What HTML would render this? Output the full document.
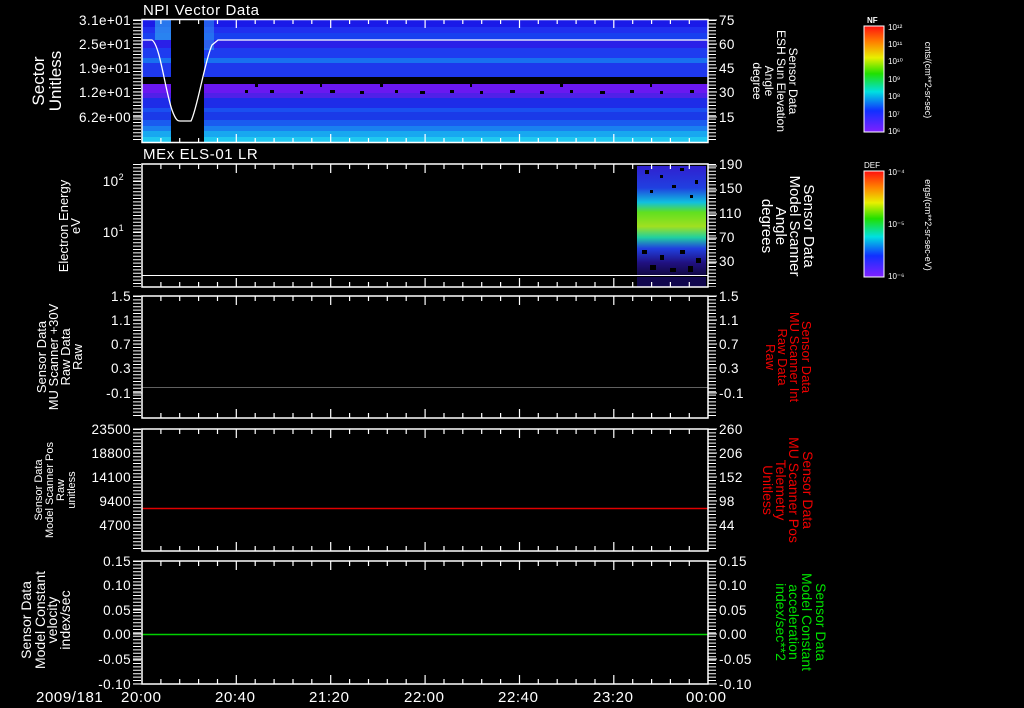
<!DOCTYPE html>
<html><head><meta charset="utf-8"><style>
html,body{margin:0;padding:0;background:#000;}
svg{display:block;font-family:"Liberation Sans",sans-serif;}
</style></head><body>
<svg width="1024" height="708" viewBox="0 0 1024 708" xmlns="http://www.w3.org/2000/svg">
<defs>
<linearGradient id="cb" x1="0" y1="0" x2="0" y2="1">
<stop offset="0" stop-color="#ff1010"/><stop offset="0.15" stop-color="#ff8000"/><stop offset="0.3" stop-color="#e8f000"/><stop offset="0.45" stop-color="#20e000"/><stop offset="0.62" stop-color="#00e0e0"/><stop offset="0.8" stop-color="#1030ff"/><stop offset="1" stop-color="#8020ff"/>
</linearGradient>
<linearGradient id="sp2" x1="0" y1="0" x2="0" y2="1">
<stop offset="0" stop-color="#3020d0"/><stop offset="0.2" stop-color="#2040e0"/><stop offset="0.33" stop-color="#10c0e0"/><stop offset="0.42" stop-color="#60e020"/><stop offset="0.55" stop-color="#a0e020"/><stop offset="0.65" stop-color="#20d0a0"/><stop offset="0.75" stop-color="#2040e0"/><stop offset="0.88" stop-color="#201080"/><stop offset="1" stop-color="#100840"/>
</linearGradient>
<path id="mt" d="M160.9,0v5M179.7,0v5M198.6,0v5M217.5,0v5M236.3,0v9M255.2,0v5M274.1,0v5M293,0v5M311.8,0v5M330.7,0v9M349.6,0v5M368.5,0v5M387.3,0v5M406.2,0v5M425.1,0v9M444,0v5M462.8,0v5M481.7,0v5M500.6,0v5M519.5,0v9M538.3,0v5M557.2,0v5M576.1,0v5M595,0v5M613.8,0v9M632.7,0v5M651.6,0v5M670.4,0v5M689.3,0v5" stroke="#fff" stroke-width="1.2" fill="none"/>
<path id="mb" d="M160.9,0v-5M179.7,0v-5M198.6,0v-5M217.5,0v-5M236.3,0v-9M255.2,0v-5M274.1,0v-5M293,0v-5M311.8,0v-5M330.7,0v-9M349.6,0v-5M368.5,0v-5M387.3,0v-5M406.2,0v-5M425.1,0v-9M444,0v-5M462.8,0v-5M481.7,0v-5M500.6,0v-5M519.5,0v-9M538.3,0v-5M557.2,0v-5M576.1,0v-5M595,0v-5M613.8,0v-9M632.7,0v-5M651.6,0v-5M670.4,0v-5M689.3,0v-5" stroke="#fff" stroke-width="1.2" fill="none"/>
</defs>

<!-- Panel 1 spectrogram -->
<g>
<rect x="142" y="20" width="566" height="7" fill="#1a1ae8"/>
<rect x="142" y="27" width="566" height="6" fill="#2030f0"/>
<rect x="142" y="33" width="566" height="7" fill="#1840f0"/>
<rect x="142" y="40" width="566" height="8" fill="#2a20e8"/>
<rect x="142" y="48" width="566" height="10" fill="#1e3cf0"/>
<rect x="142" y="58" width="566" height="5" fill="#1870f0"/>
<rect x="142" y="63" width="566" height="14" fill="#1e38ec"/>
<rect x="142" y="77" width="566" height="7" fill="#000"/>
<rect x="142" y="84" width="566" height="9" fill="#6a18f0"/>
<rect x="142" y="93" width="566" height="5" fill="#5020e8"/>
<rect x="142" y="98" width="566" height="10" fill="#1e2ce8"/>
<rect x="142" y="108" width="566" height="4" fill="#1a50f0"/>
<rect x="142" y="112" width="566" height="8" fill="#1a3ae8"/>
<rect x="142" y="120" width="566" height="6" fill="#1a5cf0"/>
<rect x="142" y="126" width="566" height="5" fill="#1a80f0"/>
<rect x="142" y="131" width="566" height="6" fill="#18a8f0"/>
<rect x="142" y="137" width="566" height="5" fill="#20c8f0"/>
<rect x="155" y="20" width="16" height="20" fill="#30a0f0" opacity="0.7"/>
<rect x="204" y="20" width="10" height="30" fill="#30a0f0" opacity="0.5"/>
<rect x="171" y="20" width="33" height="122" fill="#000"/>
<g fill="#000">
<rect x="245" y="90" width="3" height="3"/><rect x="270" y="90" width="4" height="3"/><rect x="300" y="91" width="3" height="3"/><rect x="330" y="90" width="5" height="3"/><rect x="360" y="91" width="4" height="3"/><rect x="395" y="90" width="3" height="3"/><rect x="420" y="91" width="5" height="3"/><rect x="450" y="90" width="4" height="3"/><rect x="480" y="91" width="3" height="3"/><rect x="510" y="90" width="5" height="3"/><rect x="540" y="91" width="4" height="3"/><rect x="570" y="90" width="3" height="3"/><rect x="600" y="91" width="5" height="3"/><rect x="630" y="90" width="4" height="3"/><rect x="660" y="91" width="3" height="3"/><rect x="690" y="90" width="4" height="3"/>
<rect x="255" y="84" width="3" height="3"/><rect x="320" y="84" width="2" height="3"/><rect x="380" y="84" width="3" height="3"/><rect x="470" y="84" width="2" height="3"/><rect x="560" y="84" width="3" height="3"/><rect x="650" y="84" width="2" height="3"/>
</g>
<path d="M142,40 L152,40 C160,45 165,90 172,110 C176,121 178,121 180,121 L191,121 C197,110 205,60 212,45 L218,40 L708,40" fill="none" stroke="#fff" stroke-width="1.3"/>
</g>

<!-- Panel 2 spectrogram -->
<rect x="637" y="166" width="69" height="110" fill="url(#sp2)"/>
<g fill="#000">
<rect x="645" y="170" width="4" height="4"/><rect x="660" y="175" width="3" height="3"/><rect x="680" y="168" width="4" height="3"/><rect x="695" y="180" width="3" height="4"/><rect x="650" y="190" width="3" height="3"/><rect x="672" y="185" width="4" height="3"/><rect x="690" y="195" width="3" height="3"/>
<rect x="642" y="250" width="5" height="4"/><rect x="660" y="255" width="4" height="5"/><rect x="680" y="250" width="5" height="4"/><rect x="696" y="258" width="5" height="5"/><rect x="650" y="265" width="6" height="5"/><rect x="670" y="268" width="6" height="4"/><rect x="688" y="266" width="5" height="6"/>
</g>
<rect x="637" y="277" width="69" height="10" fill="#1a0a80" opacity="0.6"/>
<line x1="142" y1="275.5" x2="708" y2="275.5" stroke="#fff" stroke-width="1"/>

<!-- data lines -->
<line x1="142" y1="387.5" x2="708" y2="387.5" stroke="#606060" stroke-width="1"/>
<line x1="142" y1="508.5" x2="708" y2="508.5" stroke="#e00000" stroke-width="1.5"/>
<line x1="142" y1="634.5" x2="708" y2="634.5" stroke="#00d000" stroke-width="1.5"/>

<!-- frames -->
<g fill="none" stroke="#fff" stroke-width="1.5">
<rect x="142" y="19.5" width="566" height="123"/>
<rect x="142" y="164" width="566" height="123"/>
<rect x="142" y="296" width="566" height="122"/>
<rect x="142" y="429" width="566" height="122"/>
<rect x="142" y="561" width="566" height="123"/>
</g>
<!-- time ticks -->
<use href="#mt" y="19"/><use href="#mb" y="143"/>
<use href="#mt" y="164"/><use href="#mb" y="287"/>
<use href="#mt" y="296"/><use href="#mb" y="418"/>
<use href="#mt" y="429"/><use href="#mb" y="551"/>
<use href="#mt" y="561"/><use href="#mb" y="684"/>

<!-- y minor ticks (dense) -->
<g stroke="#fff" fill="none">
<path d="M137,20v122M712,20v122M137,164v123M712,164v123M137,296v122M712,296v122M137,429v122M712,429v122M137,561v123M712,561v123" stroke-width="8" stroke-dasharray="1 2.4"/>
</g>
<g stroke="#fff" stroke-width="1">
<path d="M133,20h9M133,44h9M133,68h9M133,92h9M133,117h9M708,20h9M708,44h9M708,68h9M708,92h9M708,117h9"/>
<path d="M133,181h9M133,232h9M708,166h9M708,190h9M708,214h9M708,238h9M708,262h9"/>
<path d="M133,296h9M133,320h9M133,344h9M133,368h9M133,393h9M708,296h9M708,320h9M708,344h9M708,368h9M708,393h9"/>
<path d="M133,429h9M133,453h9M133,477h9M133,501h9M133,525h9M708,429h9M708,453h9M708,477h9M708,501h9M708,525h9"/>
<path d="M133,561h9M133,585h9M133,610h9M133,634h9M133,659h9M133,684h9M708,561h9M708,585h9M708,610h9M708,634h9M708,659h9M708,684h9"/>
</g>

<!-- tick labels -->
<g fill="#fff" font-size="13.5" letter-spacing="0.4">
<g text-anchor="end">
<text x="131" y="25">3.1e+01</text><text x="131" y="49">2.5e+01</text><text x="131" y="73">1.9e+01</text><text x="131" y="97">1.2e+01</text><text x="131" y="122">6.2e+00</text>
<text x="124" y="186">10<tspan font-size="9" dy="-6">2</tspan></text><text x="124" y="237">10<tspan font-size="9" dy="-6">1</tspan></text>
<text x="131" y="301">1.5</text><text x="131" y="325">1.1</text><text x="131" y="349">0.7</text><text x="131" y="373">0.3</text><text x="131" y="398">-0.1</text>
<text x="131" y="434">23500</text><text x="131" y="458">18800</text><text x="131" y="482">14100</text><text x="131" y="506">9400</text><text x="131" y="530">4700</text>
<text x="131" y="566">0.15</text><text x="131" y="590">0.10</text><text x="131" y="615">0.05</text><text x="131" y="639">0.00</text><text x="131" y="664">-0.05</text><text x="131" y="689">-0.10</text>
</g>
<text x="719" y="25">75</text><text x="719" y="49">60</text><text x="719" y="73">45</text><text x="719" y="97">30</text><text x="719" y="122">15</text>
<text x="719" y="169">190</text><text x="719" y="193">150</text><text x="719" y="218">110</text><text x="719" y="242">70</text><text x="719" y="266">30</text>
<text x="719" y="301">1.5</text><text x="719" y="325">1.1</text><text x="719" y="349">0.7</text><text x="719" y="373">0.3</text><text x="719" y="398">-0.1</text>
<text x="719" y="434">260</text><text x="719" y="458">206</text><text x="719" y="482">152</text><text x="719" y="506">98</text><text x="719" y="530">44</text>
<text x="719" y="566">0.15</text><text x="719" y="590">0.10</text><text x="719" y="615">0.05</text><text x="719" y="639">0.00</text><text x="719" y="664">-0.05</text><text x="719" y="689">-0.10</text>
<g font-size="15" letter-spacing="0.6">
<text x="36" y="702">2009/181</text><text x="121" y="702">20:00</text><text x="215" y="702">20:40</text><text x="309" y="702">21:20</text><text x="404" y="702">22:00</text><text x="498" y="702">22:40</text><text x="593" y="702">23:20</text><text x="686" y="702">00:00</text>
<text x="143" y="15">NPI Vector Data</text><text x="143" y="159">MEx ELS-01 LR</text>
</g>
</g>

<!-- left axis titles -->
<g fill="#fff" text-anchor="middle">
<g transform="translate(44,81) rotate(-90)" font-size="17"><text y="0">Sector</text><text y="17">Unitless</text></g>
<g transform="translate(68,226) rotate(-90)" font-size="13"><text y="0">Electron Energy</text><text y="12">eV</text></g>
<g transform="translate(46,357) rotate(-90)" font-size="13"><text y="0">Sensor Data</text><text y="12">MU Scanner +30V</text><text y="24">Raw Data</text><text y="36">Raw</text></g>
<g transform="translate(42,490) rotate(-90)" font-size="11"><text y="0">Sensor Data</text><text y="11">Model Scanner Pos</text><text y="22">Raw</text><text y="33">unitless</text></g>
<g transform="translate(31,620) rotate(-90)" font-size="14"><text y="0">Sensor Data</text><text y="14">Model Constant</text><text y="26">velocity</text><text y="39">index/sec</text></g>
</g>
<!-- right axis titles -->
<g text-anchor="middle">
<g transform="translate(789,81) rotate(90)" font-size="12" fill="#fff"><text y="0">Sensor Data</text><text y="12">ESH Sun Elevation</text><text y="24">Angle</text><text y="36">degree</text></g>
<g transform="translate(804,226) rotate(90)" font-size="15" fill="#fff"><text y="0">Sensor Data</text><text y="14">Model Scanner</text><text y="28">Angle</text><text y="42">degrees</text></g>
<g transform="translate(802,357) rotate(90)" font-size="13" fill="#f00000"><text y="0">Sensor Data</text><text y="12">MU Scanner Int</text><text y="24">Raw Data</text><text y="36">Raw</text></g>
<g transform="translate(803,490) rotate(90)" font-size="14" fill="#f00000"><text y="0">Sensor Data</text><text y="14">MU Scanner Pos</text><text y="27">Telemetry</text><text y="40">Unitless</text></g>
<g transform="translate(816,622) rotate(90)" font-size="14" fill="#00e000"><text y="0">Sensor Data</text><text y="14">Model Constant</text><text y="27">acceleration</text><text y="40">index/sec**2</text></g>
</g>

<!-- colorbars -->
<rect x="864" y="26" width="20" height="106" fill="url(#cb)" stroke="#fff" stroke-width="1"/>
<rect x="864" y="171" width="20" height="106" fill="url(#cb)" stroke="#fff" stroke-width="1"/>
<g fill="#fff" font-size="8">
<text x="867" y="23" font-weight="bold">NF</text><text x="864" y="168">DEF</text>
<text x="888" y="30">10¹²</text><text x="888" y="47">10¹¹</text><text x="888" y="64">10¹⁰</text><text x="888" y="82">10⁹</text><text x="888" y="99">10⁸</text><text x="888" y="117">10⁷</text><text x="888" y="134">10⁶</text>
<text x="888" y="175">10⁻⁴</text><text x="888" y="227">10⁻⁵</text><text x="888" y="279">10⁻⁶</text>
<g transform="translate(925,80) rotate(90)" text-anchor="middle" font-size="9"><text>cnts/(cm**2-sr-sec)</text></g>
<g transform="translate(925,225) rotate(90)" text-anchor="middle" font-size="9"><text>ergs/(cm**2-sr-sec-eV)</text></g>
</g>
</svg>
</body></html>
